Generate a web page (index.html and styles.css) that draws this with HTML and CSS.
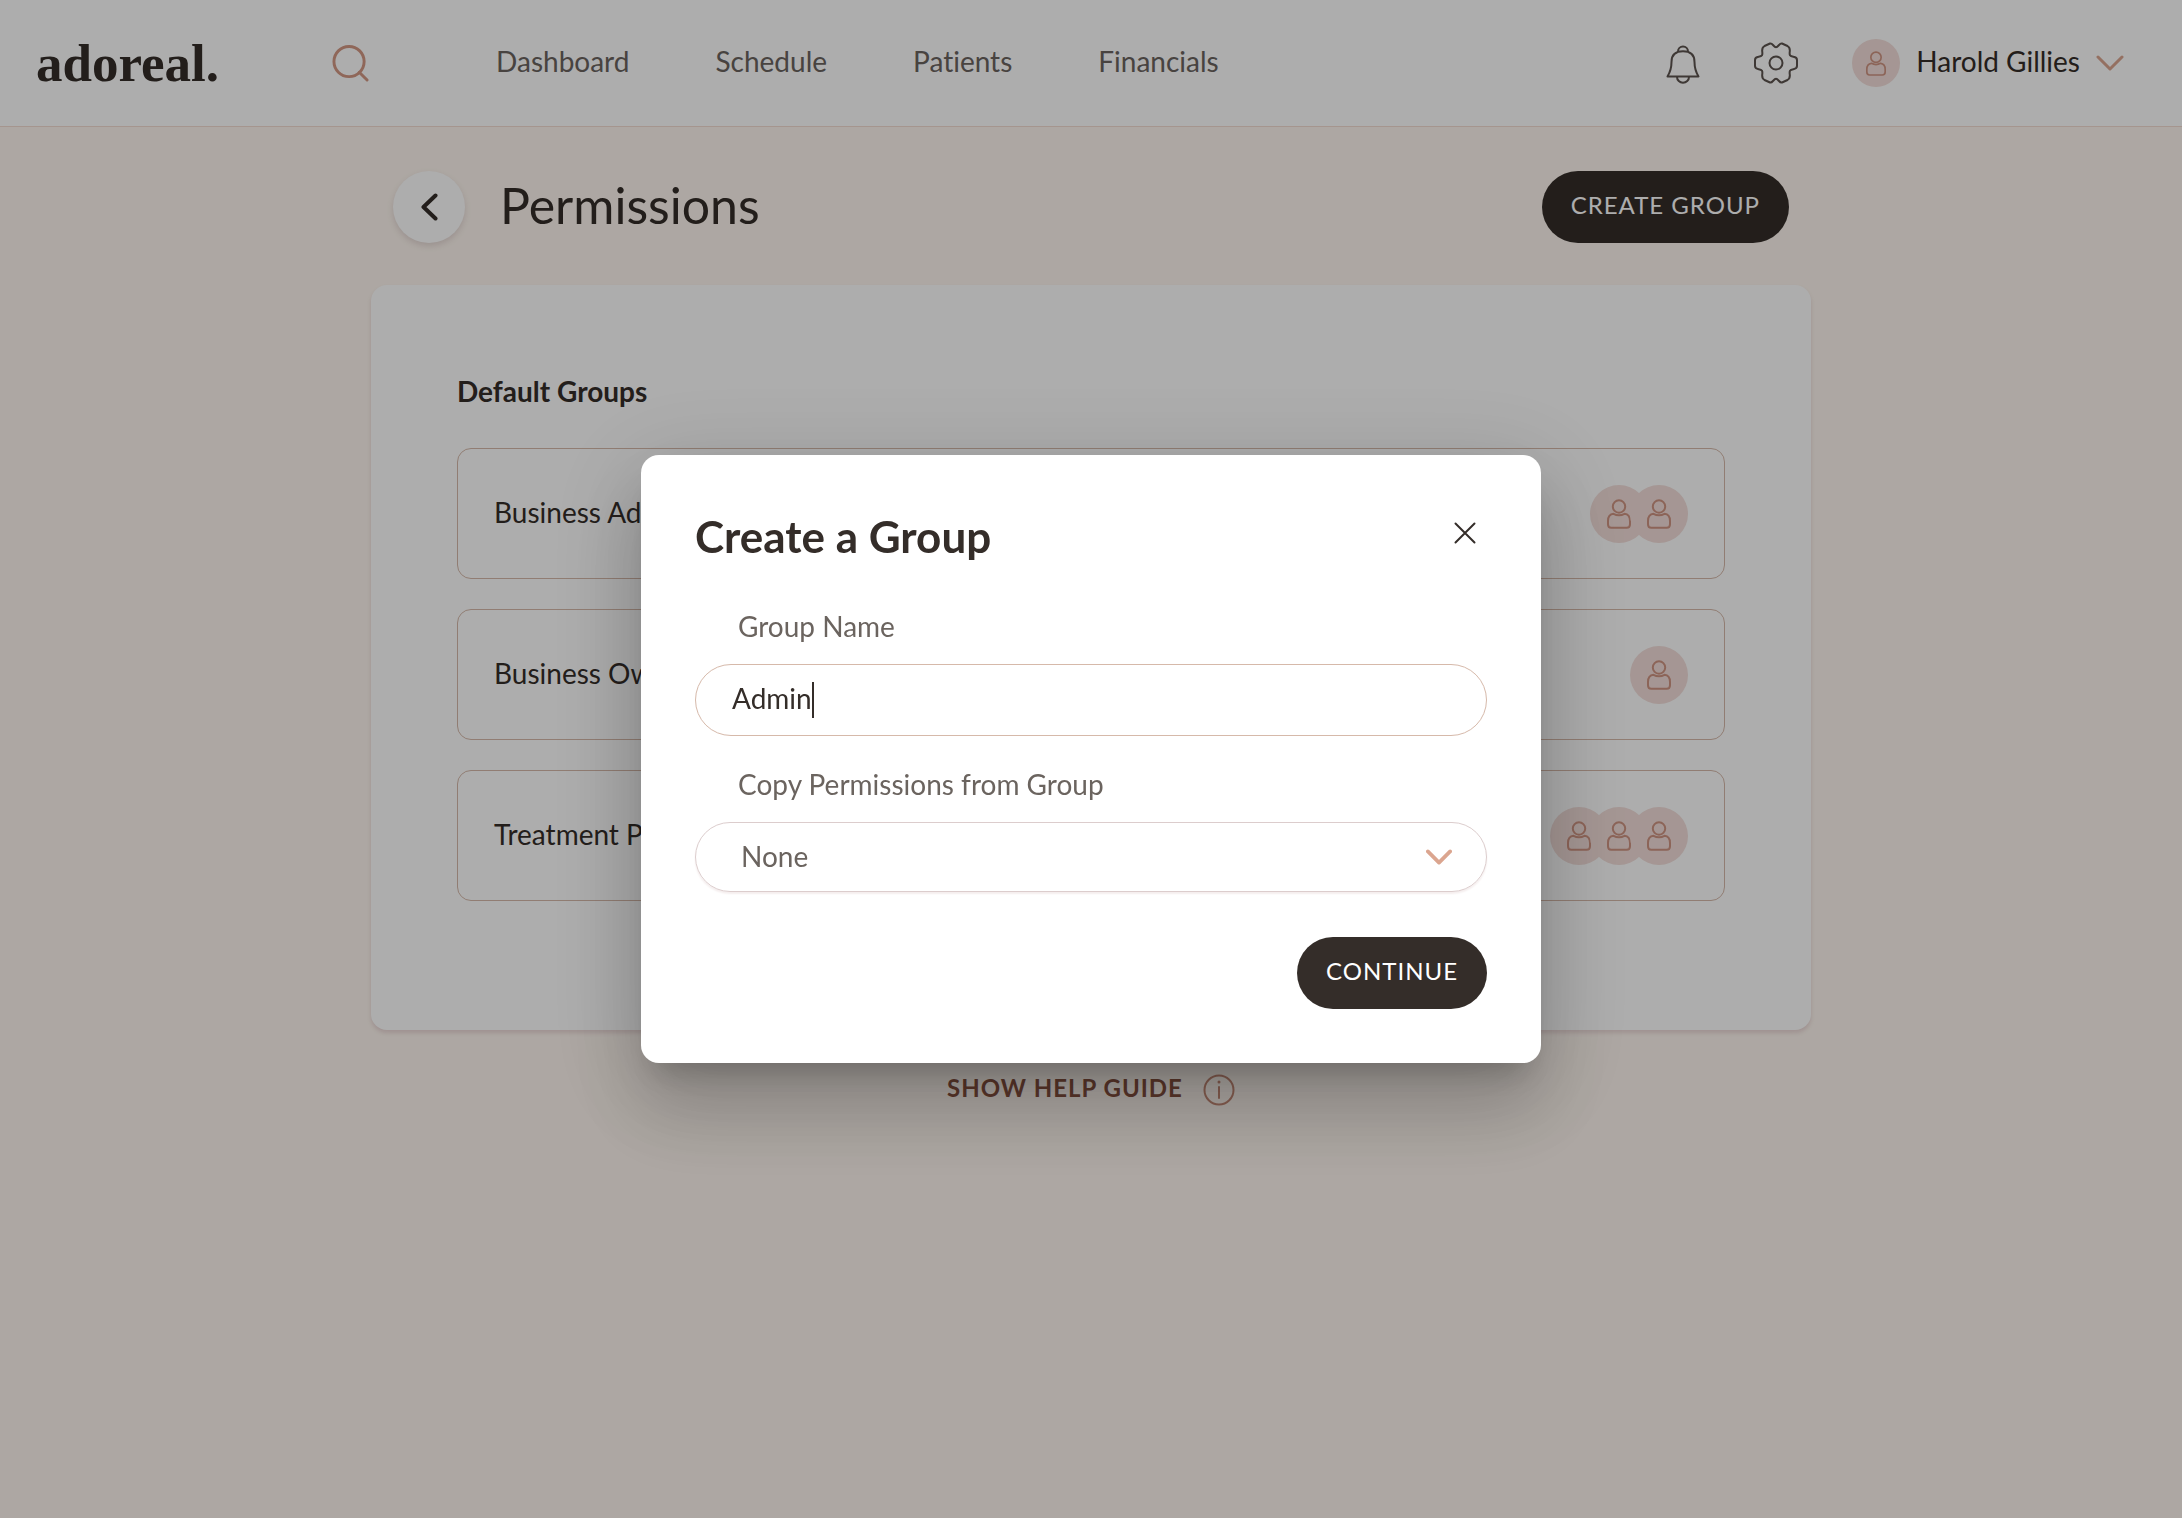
FILE: index.html
```html
<!DOCTYPE html>
<html lang="en">
<head>
<meta charset="utf-8">
<meta name="viewport" content="width=device-width, initial-scale=1">
<title>Permissions – adoreal.</title>
<link rel="stylesheet" href="styles.css">
</head>
<body>
<svg class="sprite" aria-hidden="true">
  <symbol id="person" viewBox="0 0 24 30">
    <circle cx="12" cy="7.5" r="6.2"/>
    <path d="M6.5 14.8C2.8 15.2 1 18 1 22v3.2C1 27.6 2 28.800 4.300 28.800H19.700C22 28.800 23 27.600 23 25.200V22c0-4-1.800-6.800-5.500-7.200-1.800 1-3.400 1.500-5.500 1.500s-3.700-.5-5.500-1.500z"/>
  </symbol>
  <symbol id="chevron" viewBox="0 0 28 16">
    <path d="M2 2l12 12L26 2"/>
  </symbol>
</svg>

<header class="topbar">
  <a class="logo" href="#">adoreal.</a>
  <button class="icon-button search" type="button" aria-label="Search">
    <svg class="icon-search" viewBox="0 0 38 38"><circle cx="17.500" cy="17" r="15.500"/><path d="M28 28l8 8"/></svg>
  </button>
  <nav class="nav">
    <a href="#">Dashboard</a>
    <a href="#">Schedule</a>
    <a href="#">Patients</a>
    <a href="#">Financials</a>
  </nav>
  <div class="tools">
    <button class="icon-button" type="button" aria-label="Notifications">
      <svg class="icon-bell" viewBox="0 0 34 42"><path d="M12 9.500a5 5 0 1 1 10 0M1.500 34.500C4.500 29.500 5.500 26 5.500 20 5.500 12.500 10 9.300 17 9.300S28.500 12.500 28.500 20C28.500 26 29.500 29.500 32.500 34.500zM11 35a6 5.700 0 0 0 12 0"/></svg>
    </button>
    <button class="icon-button" type="button" aria-label="Settings">
      <svg class="icon-gear" viewBox="0 0 44 42"><circle cx="22" cy="21" r="6.500"/><path d="M16 1.500C18.500 .7 19.600 5.200 22 5.200S25.500 .7 28 1.500L33.500 4C38 6.500 34.500 10.500 36 13.300 37.500 16 43 13.500 43 18V24C43 28.500 37.500 26 36 28.700 34.500 31.500 38 35.500 33.500 38L28 40.500C25.500 41.300 24.400 36.800 22 36.800S18.500 41.300 16 40.500L10.500 38C6 35.500 9.500 31.500 8 28.700 6.500 26 1 28.500 1 24V18C1 13.500 6.500 16 8 13.300 9.500 10.500 6 6.500 10.500 4Z"/></svg>
    </button>
    <button class="account" type="button">
      <span class="avatar avatar-small"><svg><use href="#person"/></svg></span>
      <span class="account-name">Harold Gillies</span>
      <svg class="chevron"><use href="#chevron"/></svg>
    </button>
  </div>
</header>

<main class="page">
  <div class="page-head">
    <button class="back" type="button" aria-label="Back">
      <svg viewBox="0 0 18 28"><path d="M15.500 2.500L3.500 14l12 11.500"/></svg>
    </button>
    <h1>Permissions</h1>
    <button class="pill-button" type="button">CREATE GROUP</button>
  </div>

  <section class="card">
    <h2>Default Groups</h2>
    <ul class="groups">
      <li class="group">
        <span class="group-name">Business Admin</span>
        <span class="avatars">
          <span class="avatar"><svg><use href="#person"/></svg></span>
          <span class="avatar"><svg><use href="#person"/></svg></span>
        </span>
      </li>
      <li class="group">
        <span class="group-name">Business Owner</span>
        <span class="avatars">
          <span class="avatar"><svg><use href="#person"/></svg></span>
        </span>
      </li>
      <li class="group">
        <span class="group-name">Treatment Provider</span>
        <span class="avatars">
          <span class="avatar"><svg><use href="#person"/></svg></span>
          <span class="avatar"><svg><use href="#person"/></svg></span>
          <span class="avatar"><svg><use href="#person"/></svg></span>
        </span>
      </li>
    </ul>
  </section>

  <a class="help" href="#">
    <span>SHOW HELP GUIDE</span>
    <svg viewBox="0 0 32 32"><circle cx="16" cy="16" r="14.500"/><path d="M16 13v11"/><circle class="dot" cx="16" cy="8" r="1.500"/></svg>
  </a>
</main>

<div class="backdrop">
  <form class="modal" role="dialog" aria-modal="true" aria-labelledby="modal-title">
    <div class="modal-head">
      <h2 id="modal-title">Create a Group</h2>
      <button class="icon-button close" type="button" aria-label="Close">
        <svg viewBox="0 0 22 22"><path d="M1.500 1.500l19 19M20.500 1.500l-19 19"/></svg>
      </button>
    </div>
    <label class="label" for="group-name">Group Name</label>
    <div class="field">
      <input id="group-name" type="text" value="Admin" size="5" autocomplete="off">
      <span class="caret"></span>
    </div>
    <label class="label" for="copy-from">Copy Permissions from Group</label>
    <div class="select">
      <select id="copy-from">
        <option>None</option>
        <option>Business Admin</option>
        <option>Business Owner</option>
      </select>
      <svg class="chevron"><use href="#chevron"/></svg>
    </div>
    <button class="pill-button submit" type="submit">CONTINUE</button>
  </form>
</div>
</body>
</html>
```
FILE: styles.css
```css
:root {
  --ink: #342d29;
  --muted: #6b645f;
  --peach: #dba58f;
  --blush: #f3deda;
  --line: #d6b9aa;
}

* {
  box-sizing: border-box;
}

body {
  margin: 0;
  min-height: 100vh;
  background: #fff7f0;
  color: var(--ink);
  font: 28px/34px Lato, "Open Sans", sans-serif;
  font-variant-ligatures: none;
}

h1,
h2,
ul {
  margin: 0;
  padding: 0;
}

a {
  color: inherit;
  text-decoration: none;
}

button,
input,
select {
  margin: 0;
  padding: 0;
  border: 0;
  background: none;
  color: inherit;
  font: inherit;
}

svg {
  display: block;
  fill: none;
  stroke: currentColor;
  stroke-linecap: round;
  stroke-linejoin: round;
}

.sprite {
  position: absolute;
  width: 0;
  height: 0;
}

/* Top bar */
.topbar {
  display: flex;
  align-items: center;
  height: 127px;
  padding: 0 58px 0 36px;
  border-bottom: 1px solid #f3dcd2;
  background: #fff;
}

.logo {
  font: bold 53px/60px "Liberation Serif", serif;
}

.search {
  margin: 0 127px 0 113px;
  color: #d39884;
}

.icon-search {
  width: 37px;
  height: 37px;
  stroke-width: 3;
}

.nav {
  display: flex;
  gap: 86px;
  padding-bottom: 4px;
  color: var(--muted);
}

.tools {
  display: flex;
  align-items: center;
  gap: 54px;
  margin-left: auto;
  color: #5c534e;
}

.icon-bell {
  width: 34px;
  height: 42px;
  stroke-width: 2;
}

.icon-gear {
  width: 44px;
  height: 42px;
  stroke-width: 2;
}

.account {
  display: flex;
  align-items: center;
  gap: 16px;
  color: var(--ink);
}

.account-name {
  padding-bottom: 4px;
}

.chevron {
  width: 28px;
  height: 16px;
  color: var(--peach);
  stroke-width: 3;
}

.avatar {
  display: grid;
  place-items: center;
  width: 58px;
  height: 58px;
  border-radius: 50%;
  background: var(--blush);
  color: #cf9482;
}

.avatar svg {
  width: 24px;
  height: 30px;
  stroke-width: 2;
}

.avatar-small {
  width: 48px;
  height: 48px;
}

.avatar-small svg {
  width: 20px;
  height: 25px;
}

/* Page */
.page {
  max-width: 1440px;
  margin: 0 auto;
  padding-top: 44px;
}

.page-head {
  display: flex;
  align-items: center;
  margin-bottom: 42px;
  padding: 0 22px;
}

.back {
  display: grid;
  place-items: center;
  width: 72px;
  height: 72px;
  border-radius: 50%;
  background: #fff;
  box-shadow: 0 3px 6px rgba(120, 90, 100, .2);
}

.back svg {
  width: 18px;
  height: 28px;
  stroke-width: 4;
}

.page-head h1 {
  margin: 0 auto 0 35px;
  padding-bottom: 4px;
  font-size: 50px;
  font-weight: 400;
  line-height: 60px;
}

.pill-button {
  height: 72px;
  padding: 0 29px 4px;
  border-radius: 36px;
  background: var(--ink);
  color: #fff;
  font-size: 24px;
  letter-spacing: 1px;
}

.card {
  padding: 89px 86px 129px;
  border-radius: 16px;
  background: #fff;
  box-shadow: 0 3px 4px rgba(150, 90, 110, .2);
}

.card h2 {
  margin-bottom: 40px;
  font-size: 28px;
  font-weight: 700;
}

.groups {
  display: grid;
  gap: 30px;
  list-style: none;
}

.group {
  display: flex;
  align-items: center;
  justify-content: space-between;
  height: 131px;
  padding: 0 36px;
  border: 1px solid var(--line);
  border-radius: 14px;
}

.group-name {
  padding-bottom: 4px;
}

.avatars {
  display: flex;
}

.avatar + .avatar {
  margin-left: -18px;
}

.help {
  display: flex;
  align-items: center;
  justify-content: center;
  gap: 20px;
  margin-top: 41px;
  color: #87513f;
  font-size: 24px;
  font-weight: 700;
  letter-spacing: 1px;
}

.help span {
  padding-bottom: 4px;
}

.help svg {
  width: 32px;
  height: 32px;
  color: #c68a76;
  stroke-width: 2;
}

.help .dot {
  fill: currentColor;
  stroke: none;
}

/* Dialog */
.backdrop {
  position: fixed;
  inset: 0;
  display: grid;
  place-items: center;
  background: rgba(0, 0, 0, .32);
}

.modal {
  display: flex;
  flex-direction: column;
  width: 100%;
  max-width: 900px;
  padding: 57px 54px 54px;
  border-radius: 18px;
  background: #fff;
  box-shadow:
    0 22px 30px -14px rgba(0, 0, 0, .2),
    0 48px 76px 6px rgba(0, 0, 0, .14),
    0 18px 92px 16px rgba(0, 0, 0, .12);
}

.modal-head {
  display: flex;
  align-items: center;
  justify-content: space-between;
  margin-bottom: 49px;
}

.modal-head h2 {
  font-size: 44px;
  font-weight: 700;
  line-height: 48px;
}

.close {
  padding: 0 11px 6px;
}

.close svg {
  width: 22px;
  height: 22px;
  stroke-width: 2;
}

.label {
  margin: 0 43px 21px;
  color: var(--muted);
}

.field {
  display: flex;
  align-items: center;
  height: 72px;
  margin-bottom: 31px;
  padding: 0 36px;
  border: 1px solid var(--line);
  border-radius: 36px;
}

.field input {
  field-sizing: content;
  padding-bottom: 4px;
  outline: 0;
  caret-color: transparent;
}

.caret {
  width: 2px;
  height: 36px;
  background: var(--ink);
}

.select {
  display: grid;
  align-items: center;
  height: 70px;
  margin-bottom: 45px;
  border: 1px solid #dccdcd;
  border-radius: 35px;
  box-shadow: 0 2px 2px #f5eeee;
}

.select select,
.select .chevron {
  grid-area: 1 / 1;
}

.select select {
  appearance: none;
  height: 68px;
  padding: 0 80px 2px 45px;
  border-radius: 34px;
  color: var(--muted);
}

.select .chevron {
  justify-self: end;
  width: 26px;
  margin-right: 34px;
  pointer-events: none;
  stroke-width: 4;
}

.submit {
  align-self: flex-end;
}
```
